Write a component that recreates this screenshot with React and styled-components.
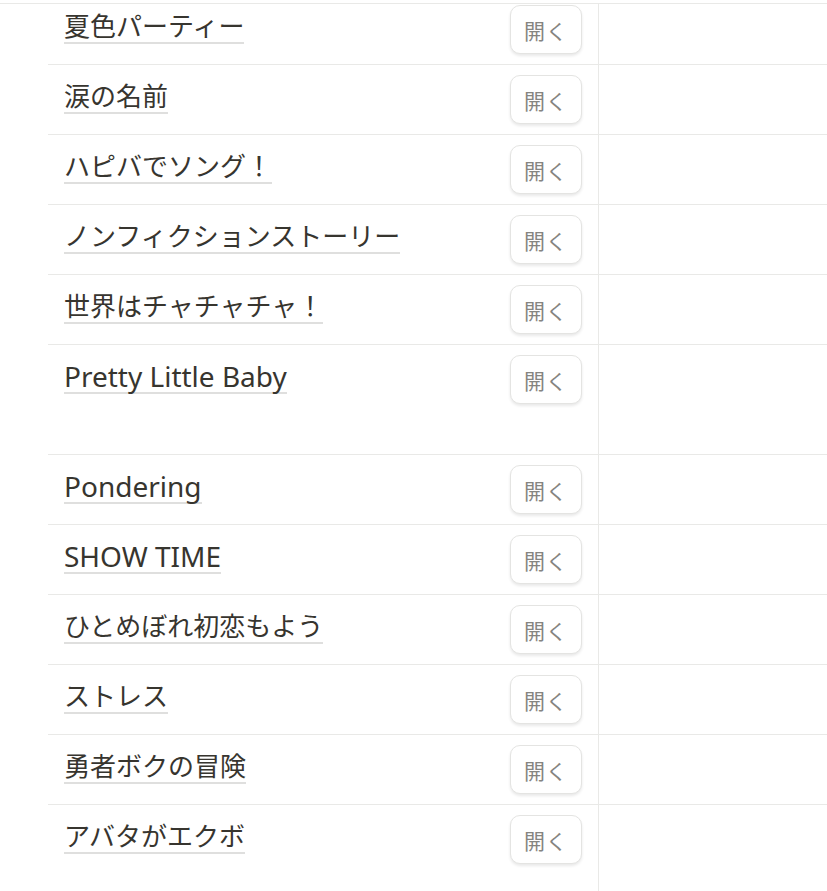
import React from 'react';
import styled, { createGlobalStyle } from 'styled-components';

const GlobalStyle = createGlobalStyle`
  html, body {
    margin: 0;
    padding: 0;
    background: #fff;
  }
  body {
    font-family: "Noto Sans", "Noto Sans CJK JP", sans-serif;
    color: #37352f;
  }
`;

const Page = styled.div`
  width: 827px;
  height: 891px;
  display: flex;
  flex-direction: column;
  overflow: hidden;
  background: #fff;
`;

const HeaderEdge = styled.div`
  height: 3px;
  flex-shrink: 0;
  border-bottom: 1px solid #e9e9e7;
`;

const Body = styled.div`
  flex: 1;
  overflow: hidden;
  display: flex;
  flex-direction: column;
  padding-left: 48px;
`;

const Table = styled.div`
  margin-top: -9px;
  flex: 1;
  display: flex;
  flex-direction: column;
`;

const Row = styled.div`
  display: grid;
  grid-template-columns: 551px 1fr;
  height: ${(p) => p.$height || 70}px;
  flex-shrink: 0;
  border-bottom: 1px solid #e9e9e7;
  box-sizing: border-box;

  &:last-of-type {
    border-bottom: none;
  }
`;

const Filler = styled.section`
  flex: 1;
  display: grid;
  grid-template-columns: 551px 1fr;
`;

const TitleCell = styled.div`
  display: flex;
  justify-content: space-between;
  align-items: flex-start;
  padding: 10px 16px 0 16px;
  border-right: 1px solid #e9e9e7;
  box-sizing: border-box;
`;

const EmptyCell = styled.div``;

const Title = styled.span`
  display: inline-block;
  margin-top: 5px;
  font-size: ${(p) => (p.$latin ? 28 : 26)}px;
  line-height: 32px;
  font-weight: 400;
  color: #37352f;
  border-bottom: 2px solid #dfdfde;
  white-space: nowrap;
`;

const OpenButton = styled.button`
  width: 72px;
  height: 49px;
  flex-shrink: 0;
  border: 1px solid #e4e4e2;
  border-radius: 10px;
  background: #fff;
  box-shadow: 0 2px 3px rgba(15, 15, 15, 0.09);
  font-family: "Noto Sans CJK JP", sans-serif;
  font-size: 21px;
  font-weight: 400;
  color: #858480;
  padding: 0;
  letter-spacing: 1px;
  cursor: pointer;
`;

const songs = [
  { title: '夏色パーティー' },
  { title: '涙の名前' },
  { title: 'ハピバでソング！' },
  { title: 'ノンフィクションストーリー' },
  { title: '世界はチャチャチャ！' },
  { title: 'Pretty Little Baby', height: 110 },
  { title: 'Pondering' },
  { title: 'SHOW TIME' },
  { title: 'ひとめぼれ初恋もよう' },
  { title: 'ストレス' },
  { title: '勇者ボクの冒険' },
  { title: 'アバタがエクボ' },
];

const isLatin = (text) => /^[\x20-\x7e]+$/.test(text);

const App = () => {
  return (
    <>
      <GlobalStyle />
      <Page>
        <HeaderEdge />
        <Body>
          <Table>
            {songs.map((song) => (
              <Row key={song.title} $height={song.height}>
                <TitleCell>
                  <Title $latin={isLatin(song.title)}>{song.title}</Title>
                  <OpenButton>開く</OpenButton>
                </TitleCell>
                <EmptyCell />
              </Row>
            ))}
            <Filler>
              <TitleCell />
              <EmptyCell />
            </Filler>
          </Table>
        </Body>
      </Page>
    </>
  );
};

export default App;
